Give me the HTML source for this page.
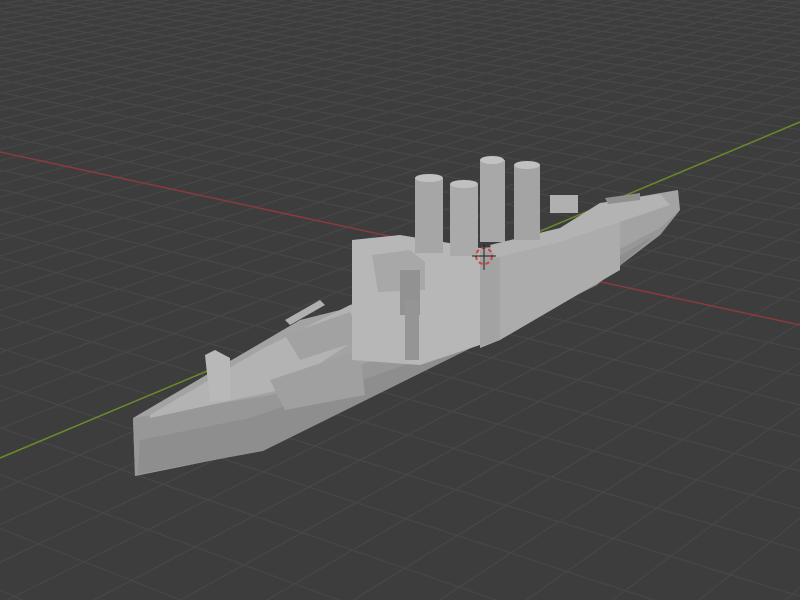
<!DOCTYPE html>
<html><head><style>
html,body{margin:0;padding:0;background:#3d3d3d;overflow:hidden;width:800px;height:600px}
svg{display:block;overflow:hidden}
</style></head><body>
<svg id="s" width="800" height="600" viewBox="0 0 800 600" xmlns="http://www.w3.org/2000/svg">
<rect width="800" height="600" fill="#3d3d3d"/>
<g id="grid" stroke="#474747" stroke-width="1.2" fill="none"></g>
<line x1="0" y1="152" x2="800" y2="325" stroke="#8a3a3a" stroke-width="1.5"/>
<line x1="0" y1="458" x2="800" y2="122" stroke="#6a8a2a" stroke-width="1.5"/>
<polygon points="133,418 300,320 420,290 560,235 620,200 678,190 680,210 660,235 597,283 463,350 263,450 135,476" fill="#a3a3a3"/>
<polygon points="133,418 270,395 420,345 560,280 660,228 680,210 660,235 597,283 463,350 263,450 135,476" fill="#979797"/>
<polygon points="140,440 250,418 420,360 560,292 655,235 597,285 463,352 263,451 138,474" fill="#8e8e8e"/>
<polygon points="150,415 260,350 350,305 380,295 370,330 280,390 150,418" fill="#b3b3b3"/>
<polygon points="270,380 360,350 365,395 285,410" fill="#a0a0a0"/>
<polygon points="205,355 215,350 230,358 230,400 210,402" fill="#b8b8b8"/>
<polygon points="285,320 320,300 325,305 290,325" fill="#b0b0b0"/>
<polygon points="285,335 350,312 362,340 300,360" fill="#a2a2a2"/>
<polygon points="352,240 400,235 480,248 480,345 420,365 352,360" fill="#b7b7b7"/>
<polygon points="480,248 560,242 620,222 620,270 500,340 480,348" fill="#acacac"/>
<polygon points="480,250 480,346 500,340 500,255" fill="#a3a3a3"/>
<polygon points="490,245 560,228 600,203 660,194 670,205 620,222 560,242 495,258" fill="#b3b3b3"/>
<polygon points="372,255 410,250 425,262 425,290 378,292" fill="#a8a8a8"/>
<rect x="400" y="270" width="20" height="45" fill="#929292"/>
<rect x="405" y="300" width="14" height="60" fill="#959595"/>
<rect x="415" y="178" width="28" height="75" fill="#a6a6a6"/><ellipse cx="429" cy="178" rx="14" ry="4" fill="#c0c0c0"/>
<rect x="450" y="184" width="28" height="72" fill="#aaaaaa"/><ellipse cx="464" cy="184" rx="14" ry="4" fill="#c0c0c0"/>
<rect x="480" y="160" width="25" height="82" fill="#a8a8a8"/><ellipse cx="492" cy="160" rx="12" ry="4" fill="#c2c2c2"/>
<rect x="514" y="165" width="26" height="75" fill="#a4a4a4"/><ellipse cx="527" cy="165" rx="13" ry="4" fill="#c0c0c0"/>
<rect x="550" y="195" width="28" height="18" fill="#b0b0b0"/>
<polygon points="605,198 640,193 640,200 608,204" fill="#8f8f8f"/>
<circle cx="484" cy="256" r="8" fill="none" stroke="#d04040" stroke-width="2" stroke-dasharray="4 3"/>
<line x1="484" y1="244" x2="484" y2="270" stroke="#222" stroke-width="1"/>
<line x1="472" y1="256" x2="496" y2="256" stroke="#222" stroke-width="1"/>
</svg>
<script>
(function(){
var O=[481,256],Vr=[-2093,-300],Vg=[1805,-300],s1=0.0137,s2=0.025;
function P(u,v){var w=1+u*s1+v*s2;return[(O[0]+u*s1*Vr[0]+v*s2*Vg[0])/w,(O[1]+u*s1*Vr[1]+v*s2*Vg[1])/w];}
var g=document.getElementById('grid'),h='';
var lo=-40,hi=60;
function ok(u,v){return 1+u*s1+v*s2>0.05;}
for(var i=lo;i<=hi;i++){
 var a,b;
 var vmin=lo;
 while(!ok(i,vmin)&&vmin<hi)vmin+=0.5;
 if(ok(i,vmin)&&ok(i,hi)){a=P(i,vmin);b=P(i,hi);h+='<line x1="'+a[0]+'" y1="'+a[1]+'" x2="'+b[0]+'" y2="'+b[1]+'"/>';}
 var umin=lo;
 while(!ok(umin,i)&&umin<hi)umin+=0.5;
 if(ok(umin,i)&&ok(hi,i)){a=P(umin,i);b=P(hi,i);h+='<line x1="'+a[0]+'" y1="'+a[1]+'" x2="'+b[0]+'" y2="'+b[1]+'"/>';}
}
g.innerHTML=h;
})();
</script>
</body></html>
